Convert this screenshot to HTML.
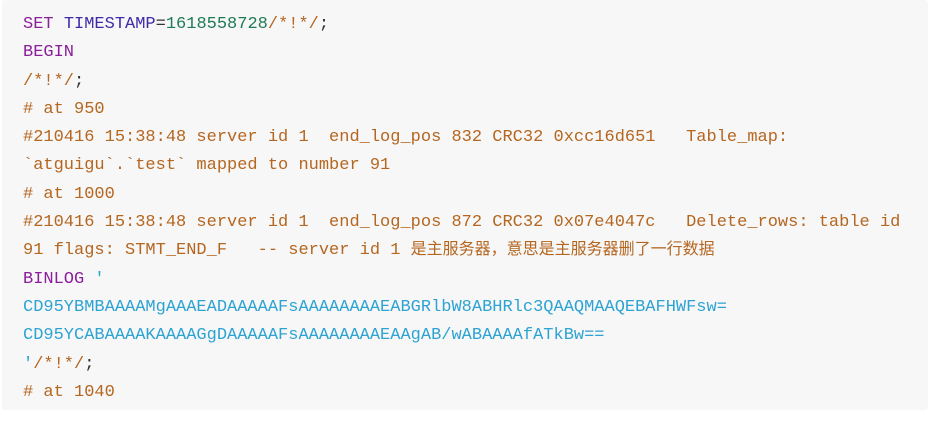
<!DOCTYPE html>
<html><head><meta charset="utf-8"><style>
html,body{margin:0;padding:0;background:#fff;width:944px;height:421px;overflow:hidden}
pre{position:absolute;left:2px;top:0;width:926px;height:410px;margin:0;background:#f7f7f8;border-radius:3px;box-sizing:border-box;padding:11px 0 0 21px;font-family:"Liberation Mono","Noto Sans CJK SC",monospace;font-size:17px;line-height:28.3px;color:#333;white-space:pre}
.k{color:#8b1e9a}.v{color:#3f2aa8}.n{color:#1e7a55}.c{color:#b5661f}.s{color:#2da3d2}
.z{font-family:"Noto Sans CJK SC",sans-serif;font-size:16px;line-height:1;display:inline-block;vertical-align:baseline}
</style></head><body><pre><span class="k">SET</span> <span class="v">TIMESTAMP</span>=<span class="n">1618558728</span><span class="c">/*!*/</span>;
<span class="k">BEGIN</span>
<span class="c">/*!*/</span>;
<span class="c"># at 950</span>
<span class="c">#210416 15:38:48 server id 1  end_log_pos 832 CRC32 0xcc16d651   Table_map:</span>
<span class="c">`atguigu`.`test` mapped to number 91</span>
<span class="c"># at 1000</span>
<span class="c">#210416 15:38:48 server id 1  end_log_pos 872 CRC32 0x07e4047c   Delete_rows: table id</span>
<span class="c">91 flags: STMT_END_F   -- server id 1 <span class="z">是主服务器，意思是主服务器删了一行数据</span></span>
<span class="k">BINLOG</span> <span class="s">'</span>
<span class="s">CD95YBMBAAAAMgAAAEADAAAAAFsAAAAAAAAEABGRlbW8ABHRlc3QAAQMAAQEBAFHWFsw=</span>
<span class="s">CD95YCABAAAAKAAAAGgDAAAAAFsAAAAAAAAEAAgAB/wABAAAAfATkBw==</span>
<span class="s">'</span><span class="c">/*!*/</span>;
<span class="c"># at 1040</span></pre></body></html>
